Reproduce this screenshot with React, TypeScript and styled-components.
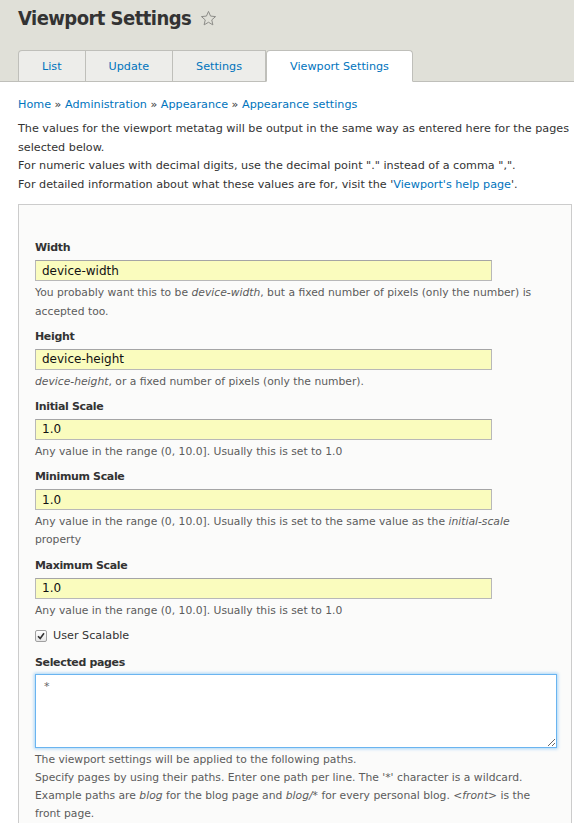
import React from "react";
import styled, { createGlobalStyle } from "styled-components";

const FONT = `"DejaVu Sans", Verdana, sans-serif`;

const Global = createGlobalStyle`
  html, body { margin: 0; padding: 0; background: #fff; }
  body { font-family: ${FONT}; font-size: 11.2px; color: #333; }
`;

const Header = styled.header`
  background: #e0e0d8;
  border-bottom: 1px solid #bfbfba;
  padding: 0 18px;
`;

const TitleRow = styled.div`
  display: flex;
  align-items: center;
  gap: 9px;
  height: 36px;
`;

const Title = styled.h1`
  margin: 0;
  font-family: "DejaVu Sans Condensed", "DejaVu Sans", sans-serif;
  font-size: 20px;
  letter-spacing: -0.55px;
  font-weight: bold;
  color: #333;
  line-height: 36px;
`;

const Tabs = styled.ul`
  display: flex;
  list-style: none;
  margin: 14px 0 -1px 0;
  padding: 0;
`;

const Tab = styled.li<{ $active?: boolean; $first?: boolean }>`
  height: 30px;
  display: flex;
  align-items: center;
  padding: 0 23px;
  border: 1px solid #bfbfba;
  border-left: ${(p) => (p.$first || p.$active ? "1px solid #bfbfba" : "none")};
  border-bottom: ${(p) => (p.$active ? "1px solid #fff" : "none")};
  background: ${(p) => (p.$active ? "#fff" : "#ededea")};
  border-radius: ${(p) => (p.$active ? "4px 4px 0 0" : p.$first ? "4px 0 0 0" : "0")};
  color: #0074bd;
  font-size: 11.2px;
`;

const Page = styled.main`
  padding: 0 2px 20px 18px;
`;

const Breadcrumb = styled.div`
  margin-top: 14px;
  line-height: 18px;
  color: #333;
`;

const Link = styled.a`
  color: #0074bd;
  text-decoration: none;
`;

const Intro = styled.p`
  margin: 6px 0 10px;
  line-height: 18.6px;
`;

const Fieldset = styled.section`
  border: 1px solid #ccc;
  background: #fbfbfa;
  padding: 34px 16px 0 16px;
`;

const Item = styled.div<{ $gap?: number }>`
  margin-bottom: ${(p) => p.$gap ?? 7}px;
`;

const Label = styled.label<{ $mb?: number }>`
  display: block;
  font-weight: bold;
  font-size: 11px;
  letter-spacing: -0.35px;
  line-height: 18px;
  margin-bottom: ${(p) => p.$mb ?? 3}px;
`;

const TextInput = styled.input`
  box-sizing: border-box;
  width: 457px;
  height: 21px;
  border: 1px solid #b8b8b8;
  border-top-color: #a5a5a5;
  background: #fafcbe;
  font-family: ${FONT};
  font-size: 12px;
  color: #111;
  padding: 0 6px;
  margin: 0 0 3px;
  display: block;
  outline: none;
`;

const Desc = styled.div`
  color: #5c5c5c;
  font-size: 10.75px;
  line-height: 18.2px;
  em { font-style: italic; }
`;

const CheckRow = styled.label`
  display: flex;
  align-items: center;
  gap: 6px;
  line-height: 18px;
`;

const Box = styled.span`
  width: 10px;
  height: 10px;
  border: 1px solid #a0a0a0;
  border-radius: 2px;
  background: linear-gradient(#fff, #e6e6e6);
  display: flex;
  align-items: center;
  justify-content: center;
`;

const Area = styled.textarea`
  box-sizing: border-box;
  display: block;
  width: 522px;
  height: 74px;
  border: 1px solid #6ab4f0;
  box-shadow: 0 0 3px 1px #a9d5f7;
  background: #fff;
  font-family: ${FONT};
  font-size: 11px;
  color: #666;
  padding: 5px 8px;
  resize: vertical;
  outline: none;
  margin-bottom: 3px;
`;

const Star = () => (
  <svg width="17" height="17" viewBox="0 0 24 24" fill="none" stroke="#8c8c88" strokeWidth="1.4" strokeLinejoin="round">
    <polygon points="12,2 14.9,8.6 22,9.3 16.6,14 18.2,21 12,17.3 5.8,21 7.4,14 2,9.3 9.1,8.6" />
  </svg>
);

export default function App() {
  return (
    <>
      <Global />
      <Header>
        <TitleRow>
          <Title>Viewport Settings</Title>
          <Star />
        </TitleRow>
        <Tabs>
          <Tab $first>List</Tab>
          <Tab>Update</Tab>
          <Tab>Settings</Tab>
          <Tab $active>Viewport Settings</Tab>
        </Tabs>
      </Header>
      <Page>
        <Breadcrumb>
          <Link href="#">Home</Link> » <Link href="#">Administration</Link> » <Link href="#">Appearance</Link> »{" "}
          <Link href="#">Appearance settings</Link>
        </Breadcrumb>
        <Intro>
          The values for the viewport metatag will be output in the same way as entered here for the pages selected below.
          <br />
          For numeric values with decimal digits, use the decimal point "." instead of a comma ",".
          <br />
          For detailed information about what these values are for, visit the '<Link href="#">Viewport's help page</Link>'.
        </Intro>
        <Fieldset>
          <Item>
            <Label>Width</Label>
            <TextInput defaultValue="device-width" />
            <Desc>
              You probably want this to be <em>device-width</em>, but a fixed number of pixels (only the number) is accepted too.
            </Desc>
          </Item>
          <Item>
            <Label>Height</Label>
            <TextInput defaultValue="device-height" />
            <Desc>
              <em>device-height</em>, or a fixed number of pixels (only the number).
            </Desc>
          </Item>
          <Item>
            <Label>Initial Scale</Label>
            <TextInput defaultValue="1.0" />
            <Desc>Any value in the range (0, 10.0]. Usually this is set to 1.0</Desc>
          </Item>
          <Item>
            <Label>Minimum Scale</Label>
            <TextInput defaultValue="1.0" />
            <Desc>
              Any value in the range (0, 10.0]. Usually this is set to the same value as the <em>initial-scale</em> property
            </Desc>
          </Item>
          <Item>
            <Label>Maximum Scale</Label>
            <TextInput defaultValue="1.0" />
            <Desc>Any value in the range (0, 10.0]. Usually this is set to 1.0</Desc>
          </Item>
          <Item $gap={9}>
            <CheckRow>
              <Box>
                <svg width="8" height="8" viewBox="0 0 8 8">
                  <path d="M1 4.2 L3.2 6.4 L7 1.2" fill="none" stroke="#333" strokeWidth="1.6" />
                </svg>
              </Box>
              User Scalable
            </CheckRow>
          </Item>
          <Item>
            <Label $mb={2}>Selected pages</Label>
            <Area defaultValue="*" />
            <Desc>
              The viewport settings will be applied to the following paths.
              <br />
              Specify pages by using their paths. Enter one path per line. The '*' character is a wildcard. Example paths are{" "}
              <em>blog</em> for the blog page and <em>blog/*</em> for every personal blog. <em>&lt;front&gt;</em> is the front
              page.
            </Desc>
          </Item>
        </Fieldset>
      </Page>
    </>
  );
}
